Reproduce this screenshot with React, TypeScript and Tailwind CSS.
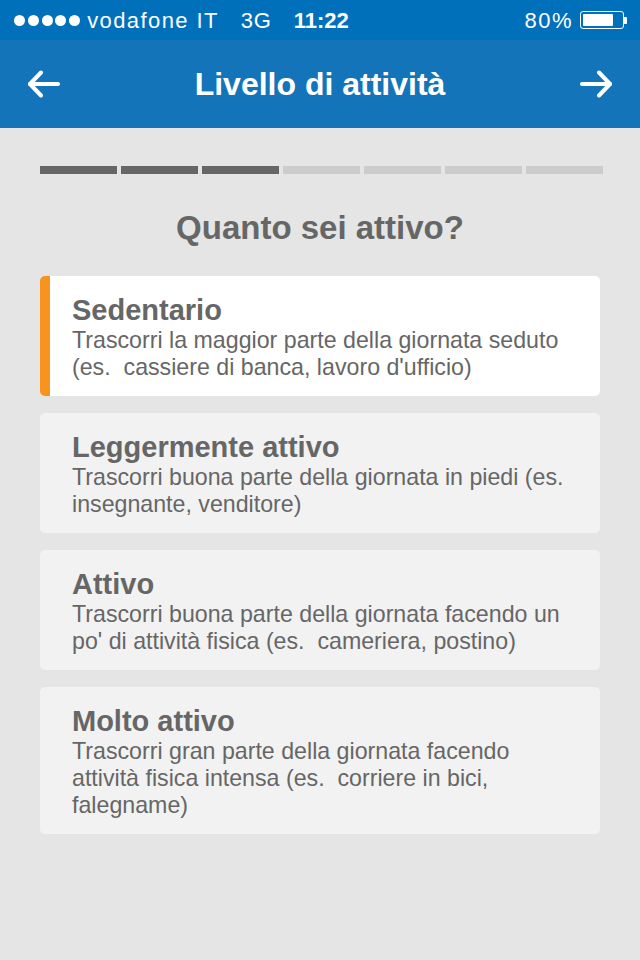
import React from "react";

const font = { fontFamily: '"Liberation Sans", Arial, sans-serif' };

type Item = { title: string; lines: string[]; selected?: boolean };

const items: Item[] = [
  {
    title: "Sedentario",
    lines: ["Trascorri la maggior parte della giornata seduto", "(es.  cassiere di banca, lavoro d'ufficio)"],
    selected: true,
  },
  {
    title: "Leggermente attivo",
    lines: ["Trascorri buona parte della giornata in piedi (es.", "insegnante, venditore)"],
  },
  {
    title: "Attivo",
    lines: ["Trascorri buona parte della giornata facendo un", "po' di attività fisica (es.  cameriera, postino)"],
  },
  {
    title: "Molto attivo",
    lines: ["Trascorri gran parte della giornata facendo", "attività fisica intensa (es.  corriere in bici,", "falegname)"],
  },
];

function Arrow({ dir }: { dir: "left" | "right" }) {
  return (
    <svg width="34" height="28" viewBox="0 0 34 28" fill="none" stroke="white" strokeWidth="4" strokeLinecap="round" strokeLinejoin="round">
      {dir === "left" ? (
        <>
          <path d="M3 14 H31" />
          <path d="M14 2.5 L3 14 L14 25.5" />
        </>
      ) : (
        <>
          <path d="M3 14 H31" />
          <path d="M20 2.5 L31 14 L20 25.5" />
        </>
      )}
    </svg>
  );
}

export default function App() {
  return (
    <div className="w-[640px] h-[960px] bg-[#e5e5e5] flex flex-col" style={font}>
      {/* status bar */}
      <div className="h-[40px] bg-[#0070bb] flex items-center text-white text-[22px] pl-[14px] pr-[13px]">
        <div className="flex items-center gap-[2.8px]">
          {[0, 1, 2, 3, 4].map((i) => (
            <span key={i} className="w-[11px] h-[11px] rounded-full bg-white" />
          ))}
        </div>
        <span className="ml-[7px] tracking-[1.4px]">vodafone IT</span>
        <span className="ml-[22px] tracking-[0.8px]">3G</span>
        <span className="ml-[22px] font-bold">11:22</span>
        <span className="ml-auto tracking-[1.5px]">80%</span>
        <div className="ml-[7px] flex items-center">
          <div className="w-[44px] h-[18px] rounded-[3px] border-[1.5px] border-white p-[2px] flex">
            <div className="w-[80%] h-full bg-white rounded-[1px]" />
          </div>
          <div className="w-[3px] h-[7px] bg-white rounded-r-[1px]" />
        </div>
      </div>

      {/* nav bar */}
      <div className="h-[88px] bg-[#1474ba] flex items-center justify-between px-[27px]">
        <Arrow dir="left" />
        <span className="text-white text-[32px] font-bold">Livello di attività</span>
        <Arrow dir="right" />
      </div>

      {/* content */}
      <div className="px-[40px] pt-[38px] flex flex-col">
        <div className="flex gap-[4px] w-[563px]">
          {[0, 1, 2, 3, 4, 5, 6].map((i) => (
            <div key={i} className={i < 3 ? "h-[8px] w-[77px] bg-[#666666]" : "h-[8px] w-[77px] bg-[#cccccc]"} />
          ))}
        </div>

        <div className="mt-[34px] text-center text-[33px] leading-[40px] font-bold text-[#666666] w-[560px]">
          Quanto sei attivo?
        </div>

        <div className="mt-[28px] flex flex-col gap-[17px] w-[560px]">
          {items.map((it) => (
            <div
              key={it.title}
              className={
                it.selected
                  ? "bg-white rounded-[5px] border-l-[10px] border-[#f7941e] pl-[22px] pt-[17px] pb-[15px]"
                  : "bg-[#f2f2f2] rounded-[5px] pl-[32px] pt-[17px] pb-[15px]"
              }
            >
              <div className="text-[29px] leading-[34px] font-bold text-[#666666]">{it.title}</div>
              <div className="text-[23.2px] leading-[27px] text-[#666666]">
                {it.lines.map((l, i) => (
                  <div key={i} className="whitespace-pre">
                    {l}
                  </div>
                ))}
              </div>
            </div>
          ))}
        </div>
      </div>
    </div>
  );
}
